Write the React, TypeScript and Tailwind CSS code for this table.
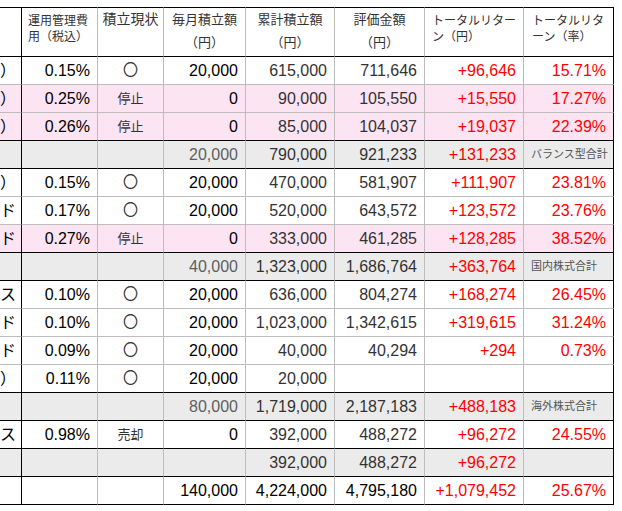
type Kind = 'data' | 'sub' | 'total'

type Row = {
  kind: Kind
  pink?: boolean
  name?: string
  fee?: string
  status?: string
  monthly?: string
  total?: string
  value?: string
  ret?: string
  rate?: string
  label?: string
}

const rows: Row[] = [
  { kind: 'data', name: 'eMAXIS Slim バランス（8資産均等型）', fee: '0.15%', status: '〇', monthly: '20,000', total: '615,000', value: '711,646', ret: '+96,646', rate: '15.71%' },
  { kind: 'data', pink: true, name: 'DC年金バランス30（債券重点型）', fee: '0.25%', status: '停止', monthly: '0', total: '90,000', value: '105,550', ret: '+15,550', rate: '17.27%' },
  { kind: 'data', pink: true, name: 'バランス・イノベーション（株式重視型）', fee: '0.26%', status: '停止', monthly: '0', total: '85,000', value: '104,037', ret: '+19,037', rate: '22.39%' },
  { kind: 'sub', monthly: '20,000', total: '790,000', value: '921,233', ret: '+131,233', label: 'バランス型合計' },
  { kind: 'data', name: 'eMAXIS Slim 国内株式（TOPIX）', fee: '0.15%', status: '〇', monthly: '20,000', total: '470,000', value: '581,907', ret: '+111,907', rate: '23.81%' },
  { kind: 'data', name: 'ニッセイTOPIXインデックスファンド', fee: '0.17%', status: '〇', monthly: '20,000', total: '520,000', value: '643,572', ret: '+123,572', rate: '23.76%' },
  { kind: 'data', pink: true, name: '日経225インデックスファンド', fee: '0.27%', status: '停止', monthly: '0', total: '333,000', value: '461,285', ret: '+128,285', rate: '38.52%' },
  { kind: 'sub', monthly: '40,000', total: '1,323,000', value: '1,686,764', ret: '+363,764', label: '国内株式合計' },
  { kind: 'data', name: 'eMAXIS Slim 先進国株式インデックス', fee: '0.10%', status: '〇', monthly: '20,000', total: '636,000', value: '804,274', ret: '+168,274', rate: '26.45%' },
  { kind: 'data', name: 'ニッセイ外国株式インデックスファンド', fee: '0.10%', status: '〇', monthly: '20,000', total: '1,023,000', value: '1,342,615', ret: '+319,615', rate: '31.24%' },
  { kind: 'data', name: 'SBI・V・S&P500インデックス・ファンド', fee: '0.09%', status: '〇', monthly: '20,000', total: '40,000', value: '40,294', ret: '+294', rate: '0.73%' },
  { kind: 'data', name: '全世界株式（オール・カントリー）', fee: '0.11%', status: '〇', monthly: '20,000', total: '20,000', value: '', ret: '', rate: '' },
  { kind: 'sub', monthly: '80,000', total: '1,719,000', value: '2,187,183', ret: '+488,183', label: '海外株式合計' },
  { kind: 'data', name: 'ひふみプラス', fee: '0.98%', status: '売却', monthly: '0', total: '392,000', value: '488,272', ret: '+96,272', rate: '24.55%' },
  { kind: 'sub', monthly: '', total: '392,000', value: '488,272', ret: '+96,272', label: '' },
  { kind: 'total', monthly: '140,000', total: '4,224,000', value: '4,795,180', ret: '+1,079,452', rate: '25.67%' },
]

const App = () => {
  return (
    <div className="w-full overflow-hidden bg-white pt-[7px] pb-[6px] font-['Liberation_Sans','Noto_Sans_CJK_JP',sans-serif]">
      <table className="ml-[-278px] w-[892px] table-fixed border-separate border-spacing-0">
        <colgroup>
          <col className="w-[300px]" />
          <col className="w-[76px]" />
          <col className="w-[66px]" />
          <col className="w-[82px]" />
          <col className="w-[89px]" />
          <col className="w-[90px]" />
          <col className="w-[99px]" />
          <col className="w-[90px]" />
        </colgroup>
        <thead>
          <tr className="h-[50px] align-top font-normal text-[#333]">
            <th className="h-[50px] border-y border-r border-black p-0 font-normal" />
            <th className="border-y border-r border-y-black border-r-[#bdbdbd] pl-[6px] pt-[5px] text-left text-[12px] font-normal leading-[16px]">
              運用管理費
              <br />
              用（税込）
            </th>
            <th className="border-y border-r border-y-black border-r-[#bdbdbd] p-0 text-center text-[14px] font-normal leading-[23px]">
              積立現状
            </th>
            <th className="border-y border-r border-y-black border-r-[#bdbdbd] p-0 text-center text-[13px] font-normal leading-[23px]">
              毎月積立額
              <br />
              （円）
            </th>
            <th className="border-y border-r border-y-black border-r-[#bdbdbd] p-0 text-center text-[13px] font-normal leading-[23px]">
              累計積立額
              <br />
              （円）
            </th>
            <th className="border-y border-r border-y-black border-r-[#bdbdbd] p-0 text-center text-[13px] font-normal leading-[23px]">
              評価金額
              <br />
              （円）
            </th>
            <th className="border-y border-r border-y-black border-r-[#bdbdbd] pl-[7px] pt-[5px] text-left text-[12px] font-normal leading-[16px]">
              トータルリター
              <br />
              ン（円）
            </th>
            <th className="border-y border-r border-black pl-[8px] pt-[5px] text-left text-[12px] font-normal leading-[16px]">
              トータルリタ
              <br />
              ーン（率）
            </th>
          </tr>
        </thead>
        <tbody>
          {rows.map((row, i) => {
            const next = rows[i + 1]
            const blackBottom = row.kind !== 'data' || !next || next.kind !== 'data'
            const bg =
              row.kind === 'sub' ? 'bg-[#ebebeb]' : row.pink ? 'bg-[#fde4f3]' : 'bg-white'
            const bb = blackBottom ? 'border-b-black' : 'border-b-[#bdbdbd]'
            const cell = `h-[28px] border-b border-r p-0 ${bb} border-r-[#bdbdbd]`
            const num = `${cell} pr-[7px] text-right text-[16px] leading-none`
            const monthlyColor = row.kind === 'sub' ? 'text-[#5e5e5e]' : 'text-black'
            const midColor = row.kind === 'total' ? 'text-black' : 'text-[#333]'
            return (
              <tr key={i} className={bg}>
                <td className={`h-[28px] overflow-hidden border-b border-r p-0 ${bb} border-r-black`}>
                  <div className="flex justify-end overflow-hidden whitespace-nowrap pr-[5px] text-[16px] leading-none text-black">
                    {row.name}
                  </div>
                </td>
                <td className={`${num} text-black`}>{row.fee}</td>
                <td className={`${cell} text-center text-[#333] ${row.status === '〇' ? 'text-[15px]' : 'text-[13px]'}`}>
                  {row.status}
                </td>
                <td className={`${num} ${monthlyColor}`}>{row.monthly}</td>
                <td className={`${num} ${midColor}`}>{row.total}</td>
                <td className={`${num} ${midColor}`}>{row.value}</td>
                <td className={`${num} text-[#ff0000]`}>{row.ret}</td>
                {row.kind === 'sub' ? (
                  <td className={`h-[28px] border-b border-r p-0 ${bb} border-r-black pl-[7px] text-left text-[11px] text-[#555]`}>
                    {row.label}
                  </td>
                ) : (
                  <td className={`h-[28px] border-b border-r p-0 ${bb} border-r-black pr-[7px] text-right text-[16px] leading-none text-[#ff0000]`}>
                    {row.rate}
                  </td>
                )}
              </tr>
            )
          })}
        </tbody>
      </table>
    </div>
  )
}

export default App
